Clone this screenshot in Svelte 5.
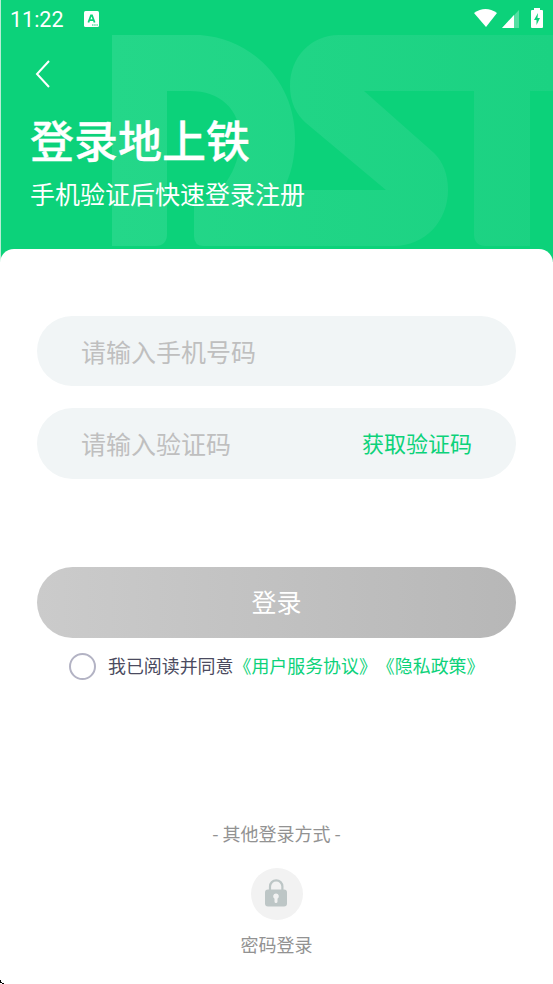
<script lang="ts">
    let phone = $state('');
    let code = $state('');
    let agreed = $state(false);
</script>

<div class="page">
    <header>
        <svg class="pattern" viewBox="0 0 553 259" aria-hidden="true">
            <defs>
                <linearGradient id="fade" gradientUnits="userSpaceOnUse" x1="112" y1="0" x2="553" y2="0">
                    <stop offset="0" stop-color="#24d789" />
                    <stop offset="1" stop-color="#1bd282" />
                </linearGradient>
            </defs>
            <g fill="url(#fade)">
                <path d="M112 35H200C254 39 295 83 295 138C295 158 291 175 283 190H386L306 123C296 114 290 102 290 86C290 57 311 35 339 35H553V91H530V246H486Q474 246 474 234V91H364L434 153C443 162 448 174 448 190C448 221 425 246 394 246H204Q194 246 194 236V205C220 199 240 170 240 138C240 109 220 91 190 91H167V234Q167 246 155 246H112Z" />
            </g>
        </svg>

        <div class="status">
            <span class="time">11:22</span>
            <svg class="app-icon" width="15" height="16" viewBox="0 0 15 16">
                <rect width="15" height="16" rx="1.5" fill="#fff" />
                <path d="M4.400 11.500L7 4.300H8L10.600 11.500M5.500 9.200H9.500" fill="none" stroke="#0cd27a" stroke-width="1.800" />
                <path d="M8 14H14" stroke="#0cd27a" stroke-dasharray="1.5 .7" />
            </svg>
            <svg class="signals" width="71" height="22" viewBox="0 0 71 22">
                <path d="M0 5Q11.5-3 23 5L12 19Z" fill="#fff" />
                <path d="M45 2V20H28Z" fill="#fff" opacity=".3" />
                <path d="M40 7V20H28Z" fill="#fff" />
                <path d="M60 0H66V2H68Q69 2 69 3V19Q69 20 68 20H58Q57 20 57 19V3Q57 2 58 2H60Z" fill="#fff" />
                <path d="M64 5L60 12H62.500V17L66 10H63.500Z" fill="#0cd27a" />
            </svg>
        </div>

        <button class="back" aria-label="返回">
            <svg width="16" height="28" viewBox="0 0 16 28">
                <path d="M14 1L2 14L14 27" fill="none" stroke="#fff" stroke-width="2" />
            </svg>
        </button>
        <h1>登录地上铁</h1>
        <p>手机验证后快速登录注册</p>
    </header>

    <main>
        <label class="field">
            <input type="tel" placeholder="请输入手机号码" bind:value={phone} />
        </label>
        <div class="field">
            <input type="text" placeholder="请输入验证码" bind:value={code} />
            <button class="get-code">获取验证码</button>
        </div>

        <button class="login">登录</button>

        <div class="agree">
            <button class="radio" class:checked={agreed} aria-label="同意" onclick={() => (agreed = !agreed)}></button>
            <span>我已阅读并同意<b>《用户服务协议》</b><b>《隐私政策》</b></span>
        </div>

        <div class="other">
            <span>- 其他登录方式 -</span>
            <button class="lock" aria-label="密码登录">
                <svg width="22" height="28" viewBox="0 0 22 28">
                    <path d="M5 12V7.500a6.200 6.200 0 0 1 12.400 0V12" fill="none" stroke="#bdc6c6" stroke-width="2.200" />
                    <rect y="10.500" width="22" height="17" rx="3" fill="#bdc6c6" />
                    <path d="M11 14.500a2.800 2.800 0 0 1 1.500 5.200V22.500a1.500 1.500 0 0 1-3 0V19.700A2.800 2.800 0 0 1 11 14.500" fill="#f2f2f2" />
                </svg>
            </button>
            <span>密码登录</span>
        </div>
    </main>
    <svg class="cursor" width="5" height="4" viewBox="0 0 5 4">
        <path d="M0 0H1V2H2V3H4V4H2V3H0Z" fill="#000" />
    </svg>
</div>

<style>
    :global(body) {
        background: #fff;
    }
    .page {
        position: relative;
        height: 984px;
        overflow: hidden;
        font-family: "Noto Sans CJK SC", sans-serif;
        font-weight: 400;
        text-spacing-trim: space-all;
    }
    button {
        border: none;
        padding: 0;
        background: none;
        font: inherit;
        cursor: pointer;
    }
    svg {
        display: block;
    }
    header {
        position: relative;
        box-sizing: border-box;
        height: 262px;
        background: #0cd27a;
        border-left: 1px solid #b6efd5;
        color: #fff;
    }
    .pattern {
        position: absolute;
        top: 0;
        left: -1px;
        width: 553px;
        height: 259px;
    }
    .status {
        position: relative;
        display: flex;
        align-items: center;
        height: 38px;
        padding: 0 8px 0 9px;
    }
    .time {
        width: 74px;
        font: 400 21.5px/38px Roboto, sans-serif;
        padding-top: 1px;
    }
    .app-icon {
        margin-bottom: 1px;
    }
    .signals {
        margin-left: auto;
        margin-bottom: 1px;
    }
    .back {
        position: relative;
        display: block;
        margin: 22px 0 0 34px;
    }
    h1 {
        position: relative;
        margin: 19px 0 0 29px;
        font-size: 44px;
        font-weight: 500;
        line-height: 64px;
        -webkit-text-stroke: 0.3px #fff;
    }
    p {
        position: relative;
        margin: 4px 0 0 29px;
        font-size: 25px;
        line-height: 36px;
    }
    main {
        position: relative;
        box-sizing: border-box;
        height: 736px;
        margin-top: -13.400px;
        padding: 67.600px 37px 0;
        background: #fff;
        border-radius: 14px 14px 0 0;
    }
    .field {
        display: flex;
        align-items: center;
        box-sizing: border-box;
        height: 70.200px;
        margin-bottom: 22px;
        padding: 0 44px;
        border-radius: 36px;
        background: #f1f5f6;
    }
    input {
        flex: 1;
        min-width: 0;
        height: 40px;
        margin-bottom: 1px;
        padding: 0;
        border: none;
        outline: none;
        background: none;
        font: inherit;
        font-size: 25px;
    }
    input::placeholder {
        color: #bfbfbf;
        opacity: 1;
    }
    .get-code {
        margin-bottom: 2px;
        font-size: 22px;
        color: #0cd27a;
    }
    .login {
        display: block;
        width: 100%;
        height: 70.400px;
        margin-top: 88.600px;
        padding-bottom: 2px;
        border-radius: 36px;
        background: linear-gradient(90deg, #cbcbcb, #b7b7b7);
        color: #fff;
        font-size: 25px;
    }
    .agree {
        display: flex;
        align-items: center;
        height: 57px;
        padding-left: 32px;
        color: #4b4b60;
        font-size: 17.930px;
        white-space: nowrap;
    }
    .agree span {
        margin-bottom: 2px;
    }
    .agree b {
        color: #0cd27a;
        font-weight: 400;
    }
    .radio {
        box-sizing: border-box;
        width: 27px;
        height: 27px;
        margin-right: 12px;
        border: 2px solid #b3b3c4;
        border-radius: 50%;
    }
    .radio.checked {
        background: #0cd27a;
    }
    .other {
        display: flex;
        flex-direction: column;
        align-items: center;
        margin-top: 125px;
        color: #929292;
        font-size: 18px;
        line-height: 26px;
    }
    .lock {
        display: flex;
        align-items: center;
        justify-content: center;
        width: 52px;
        height: 52px;
        margin: 22px 0 11px;
        border-radius: 50%;
        background: #f2f2f2;
    }
    .lock svg {
        margin: 0 1px 1px 0;
    }
    .cursor {
        position: absolute;
        left: 0;
        bottom: 0;
    }
</style>
